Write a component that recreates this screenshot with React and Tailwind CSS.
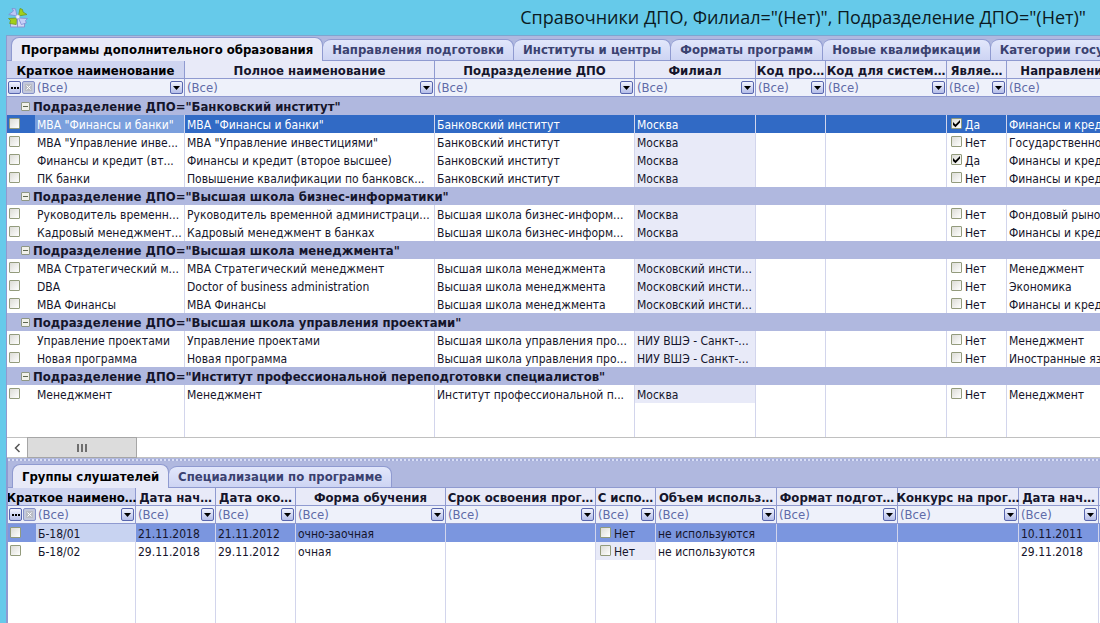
import React, { useState } from 'react';

const topTabs = [
  'Программы дополнительного образования',
  'Направления подготовки',
  'Институты и центры',
  'Форматы программ',
  'Новые квалификации',
  'Категории государственных',
];

const bottomTabs = ['Группы слушателей', 'Специализации по программе'];

const programColumns = [
  { title: 'Краткое наименование', width: 178 },
  { title: 'Полное наименование', width: 250 },
  { title: 'Подразделение ДПО', width: 200 },
  { title: 'Филиал', width: 121, shaded: true },
  { title: 'Код про…', width: 70 },
  { title: 'Код для систем…', width: 121 },
  { title: 'Являе…', width: 60, check: true },
  { title: 'Направление подготовки', width: 200 },
];

const programGroups = [
  {
    name: 'Банковский институт',
    rows: [
      ['МВА "Финансы и банки"', 'МВА "Финансы и банки"', 'Банковский институт', 'Москва', '', '', 'Да', 'Финансы и кредит'],
      ['МВА "Управление инве...', 'МВА "Управление инвестициями"', 'Банковский институт', 'Москва', '', '', 'Нет', 'Государственное управление'],
      ['Финансы и кредит (вт...', 'Финансы и кредит (второе высшее)', 'Банковский институт', 'Москва', '', '', 'Да', 'Финансы и кредит'],
      ['ПК банки', 'Повышение квалификации по банковск...', 'Банковский институт', 'Москва', '', '', 'Нет', 'Финансы и кредит'],
    ],
  },
  {
    name: 'Высшая школа бизнес-информатики',
    rows: [
      ['Руководитель временн...', 'Руководитель временной администраци...', 'Высшая школа бизнес-информ...', 'Москва', '', '', 'Нет', 'Фондовый рынок'],
      ['Кадровый менеджмент...', 'Кадровый менеджмент в банках', 'Высшая школа бизнес-информ...', 'Москва', '', '', 'Нет', 'Финансы и кредит'],
    ],
  },
  {
    name: 'Высшая школа менеджмента',
    rows: [
      ['МВА Стратегический м...', 'МВА Стратегический менеджмент', 'Высшая школа менеджмента', 'Московский инсти...', '', '', 'Нет', 'Менеджмент'],
      ['DBA', 'Doctor of business administration', 'Высшая школа менеджмента', 'Московский инсти...', '', '', 'Нет', 'Экономика'],
      ['МВА Финансы', 'МВА Финансы', 'Высшая школа менеджмента', 'Московский инсти...', '', '', 'Нет', 'Финансы и кредит'],
    ],
  },
  {
    name: 'Высшая школа управления проектами',
    rows: [
      ['Управление проектами', 'Управление проектами', 'Высшая школа управления про...', 'НИУ ВШЭ - Санкт-...', '', '', 'Нет', 'Менеджмент'],
      ['Новая программа', 'Новая программа', 'Высшая школа управления про...', 'НИУ ВШЭ - Санкт-...', '', '', 'Нет', 'Иностранные языки'],
    ],
  },
  {
    name: 'Институт профессиональной переподготовки специалистов',
    rows: [
      ['Менеджмент', 'Менеджмент', 'Институт профессиональной п...', 'Москва', '', '', 'Нет', 'Менеджмент'],
    ],
  },
];

const studentColumns = [
  { title: 'Краткое наимено…', width: 128 },
  { title: 'Дата нач…', width: 80 },
  { title: 'Дата око…', width: 80 },
  { title: 'Форма обучения', width: 150 },
  { title: 'Срок освоения прог…', width: 150 },
  { title: 'С испо…', width: 60, check: true, shaded: true },
  { title: 'Объем использ…', width: 121 },
  { title: 'Формат подгот…', width: 121 },
  { title: 'Конкурс на прог…', width: 121 },
  { title: 'Дата нач…', width: 80 },
];

const studentGroups = [
  {
    rows: [
      ['Б-18/01', '21.11.2018', '21.11.2012', 'очно-заочная', '', 'Нет', 'не используются', '', '', '10.11.2011'],
      ['Б-18/02', '29.11.2018', '29.11.2012', 'очная', '', 'Нет', 'не используются', '', '', '29.11.2018'],
    ],
  },
];

const Logo = () => (
  <svg width="20" height="20" viewBox="0 0 20 20" aria-hidden="true">
    <path d="M2.500 10.500h14v8.500h-14z" fill="#d4daf6" stroke="#8b93cf" />
    <path d="M9.500 11v8" stroke="#8b93cf" />
    <path d="M9 8 7.500 .8 4 .5 5.500 3 .8 6.500z" fill="#bcc8f5" stroke="#7f8bd2" strokeWidth=".8" />
    <path d="M10.500 8 12 .5l2.500 1 .5 2.500 4 2.500z" fill="#a4cf18" stroke="#6d9a22" strokeWidth=".8" />
    <path d="M8.500 10 .5 10.500l2 2-.8 3 6.500 1z" fill="#a4cf18" stroke="#6d9a22" strokeWidth=".8" />
    <path d="M10.500 10l9 .5-2 2 .8 2.500-5 1.500z" fill="#c6d0f7" stroke="#7f8bd2" strokeWidth=".8" />
    <circle cx="9.800" cy="8.800" r="2" fill="#edf1ff" stroke="#a7b1e3" strokeWidth=".6" />
  </svg>
);

const CheckBox = ({ label, defaultChecked }) => (
  <span className="grid size-[11px] shrink-0">
    <input
      type="checkbox"
      aria-label={label}
      defaultChecked={defaultChecked}
      className="peer col-start-1 row-start-1 size-[11px] appearance-none rounded-[1px] border border-[#939b7c] bg-linear-to-br from-[#dcdcd6] to-white"
    />
    <svg
      viewBox="0 0 11 11"
      className="pointer-events-none invisible col-start-1 row-start-1 size-[11px] peer-checked:visible"
      aria-hidden="true"
    >
      <path d="M2 4v3l2.500 2.200L9 4.500V2L4.500 6.500z" fill="#000" />
    </svg>
  </span>
);

const TabStrip = ({ tabs, active, onSelect }) => (
  <div role="tablist" className="flex items-end overflow-hidden bg-[#b0b8df] text-[13px] font-bold">
    <span className="h-6 w-1 shrink-0 border-b border-[#8f9ad0]" />
    {tabs.map((tab, i) => (
      <button
        key={tab}
        role="tab"
        aria-selected={i === active}
        onClick={() => onSelect(i)}
        className={
          i === active
            ? 'h-6 shrink-0 rounded-t-lg border border-b-0 border-[#8f9ad0] bg-[#e8eaf8] px-[9px] whitespace-nowrap text-black'
            : 'h-[22px] shrink-0 rounded-t-lg border border-l-0 border-[#8f9ad0] bg-linear-to-b from-[#e2e7fb] to-[#cdd4f3] px-[9px] whitespace-nowrap text-[#3b4270]'
        }
      >
        {tab}
      </button>
    ))}
    <span className="h-6 flex-1 border-b border-[#8f9ad0]" />
  </div>
);

const FilterCell = ({ column, first }) => (
  <div className="flex h-[17px] items-center gap-px px-px">
    {first && (
      <>
        <button aria-label="Фильтр" className="flex size-[13px] shrink-0 items-center justify-center gap-px rounded-[2px] border border-[#5866ae] bg-linear-to-b from-[#f2f4fe] to-[#b4bde8]">
          <span className="size-[2px] bg-black" />
          <span className="size-[2px] bg-black" />
          <span className="size-[2px] bg-black" />
        </button>
        <button aria-label="Сбросить" className="flex size-[13px] shrink-0 items-center justify-center rounded-[2px] border border-[#8490c8] bg-[#c3c8dc]">
          <svg width="7" height="7" viewBox="0 0 7 7" aria-hidden="true">
            <path d="M0 0h7v7H0z" fill="#b9bcc4" />
            <path d="M1.500 1.500l4 4m0-4l-4 4" stroke="#fff" />
          </svg>
        </button>
      </>
    )}
    <div className="grid min-w-0 flex-1 items-center">
      <select
        aria-label={column.title}
        className="col-start-1 row-start-1 h-[17px] w-full appearance-none pt-px pl-px text-[13px] leading-[16px] text-[#5f6ba8]"
      >
        <option>(Все)</option>
      </select>
      <span className="pointer-events-none col-start-1 row-start-1 flex size-[13px] items-center justify-center justify-self-end rounded-[2px] border border-[#5866ae] bg-linear-to-b from-[#f2f4fe] to-[#b4bde8]">
        <svg width="7" height="4" viewBox="0 0 7 4" aria-hidden="true">
          <path d="M0 0h7L3.500 4z" fill="#000" />
        </svg>
      </span>
    </div>
  </div>
);

const Grid = ({ columns, groups, theme, fillerClass, className }) => {
  const [collapsed, setCollapsed] = useState({});
  const [selected, setSelected] = useState('0-0');

  return (
    <table className={`table-fixed border-separate border-spacing-0 text-[12px] leading-[20px] text-[#15152b] ${className}`}>
      <colgroup>
        {columns.map((col, i) => (
          <col key={i} style={{ width: col.width }} />
        ))}
        <col />
      </colgroup>
      <thead>
        <tr className="bg-[#e8eaf8]">
          {columns.map((col, i) => (
            <th
              key={i}
              className={`border-r border-b border-[#8f9ad0] p-0 text-[13px] leading-[19px] font-bold whitespace-nowrap ${i === 0 ? 'bg-[#cfd5f0] text-black' : ''}`}
            >
              <div className="flex h-[17px] items-start justify-center">{col.title}</div>
            </th>
          ))}
          <td className="border-b border-[#8f9ad0] p-0" />
        </tr>
        <tr className="bg-[#eef1fa]">
          {columns.map((col, i) => (
            <td key={i} className="h-[18px] border-r border-b border-[#8f9ad0] p-0">
              <FilterCell column={col} first={i === 0} />
            </td>
          ))}
          <td className="border-b border-[#8f9ad0] p-0" />
        </tr>
      </thead>
      <tbody>
        {groups.map((group, g) => (
          <React.Fragment key={g}>
            {group.name && (
              <tr className="bg-[#b0b8df]">
                <td colSpan={columns.length + 1} className="h-[18px] p-0">
                  <div className="flex h-[18px] items-start pl-[14px] text-[13px] leading-[19px] font-bold whitespace-nowrap">
                    <button
                      aria-label={group.name}
                      onClick={() => setCollapsed({ ...collapsed, [g]: !collapsed[g] })}
                      className="mt-[5px] mr-[3px] flex size-[9px] items-center justify-center rounded-[1px] border border-[#8f9784] bg-[#f1f1ea]"
                    >
                      <span className="h-px w-[5px] bg-[#5d6650]" />
                    </button>
                    Подразделение ДПО="{group.name}"
                  </div>
                </td>
              </tr>
            )}
            {!collapsed[g] &&
              group.rows.map((row, r) => {
                const isSelected = selected === `${g}-${r}`;
                return (
                  <tr key={r} onClick={() => setSelected(`${g}-${r}`)} className={isSelected ? theme.row : ''}>
                    {row.map((value, i) => (
                      <td
                        key={i}
                        className={`h-[18px] overflow-hidden border-r border-[#d2d5ec] p-0 whitespace-nowrap ${columns[i].shaded && !isSelected ? 'bg-[#e8eaf8]' : ''}`}
                      >
                        {i === 0 && (
                          <div className="flex h-[18px]">
                            <span className="w-7 shrink-0 pt-[3px] pl-[2px]">
                              <CheckBox label={value} />
                            </span>
                            <span className={`min-w-0 flex-1 overflow-hidden pl-[2px] ${isSelected ? theme.cell : ''}`}>
                              {value}
                            </span>
                          </div>
                        )}
                        {i > 0 && columns[i].check && (
                          <label className="flex h-[18px] gap-[3px] pl-1">
                            <span className="pt-[3px]">
                              <CheckBox label={columns[i].title} defaultChecked={value === 'Да'} />
                            </span>
                            {value}
                          </label>
                        )}
                        {i > 0 && !columns[i].check && <span className="block h-[18px] pl-[2px]">{value}</span>}
                      </td>
                    ))}
                    <td className="p-0" />
                  </tr>
                );
              })}
          </React.Fragment>
        ))}
        <tr>
          {columns.map((col, i) => (
            <td key={i} className={`border-r border-[#d2d5ec] p-0 ${fillerClass}`} />
          ))}
          <td className="p-0" />
        </tr>
      </tbody>
    </table>
  );
};

const App = () => {
  const [topTab, setTopTab] = useState(0);
  const [bottomTab, setBottomTab] = useState(0);

  return (
    <div className="flex min-h-screen flex-col overflow-hidden bg-[#66caea] pl-[6px] font-['DejaVu_Sans_Condensed','DejaVu_Sans',sans-serif]">
      <header className="flex h-9 items-center justify-between border-b border-[#7fa5cf] pr-[14px] pl-[2px]">
        <Logo />
        <h1 className="font-['Open_Sans',sans-serif] text-[18px] text-[#0b1a22]">
          Справочники ДПО, Филиал="(Нет)", Подразделение ДПО="(Нет)"
        </h1>
      </header>

      <main className="flex flex-1 flex-col border-l border-[#8f9ad0] bg-white">
        {/* Programs */}
        <div className="bg-[#b0b8df] pt-px">
          <TabStrip tabs={topTabs} active={topTab} onSelect={setTopTab} />
        </div>
        <div className="overflow-hidden">
          <Grid
            columns={programColumns}
            groups={programGroups}
            theme={{ row: 'bg-[#316ac5] text-white', cell: 'bg-[#7a9fdd]' }}
            fillerClass="h-[34px]"
            className="w-full min-w-[1200px]"
          />
        </div>

        {/* Horizontal scroll bar */}
        <div className="flex h-[21px] border-y border-[#c0c0c0] bg-white">
          <button aria-label="Прокрутить влево" className="flex w-5 items-center justify-center">
            <svg width="7" height="10" viewBox="0 0 7 10" aria-hidden="true">
              <path d="M5.500 1 1.500 5l4 4" fill="none" stroke="#555" strokeWidth="1.500" />
            </svg>
          </button>
          <div className="-my-px flex w-[110px] items-center justify-center gap-[2px] border border-[#a6a6a6] bg-[#dcdcdc]">
            <span className="h-2 w-[2px] bg-[#6e6e6e]" />
            <span className="h-2 w-[2px] bg-[#6e6e6e]" />
            <span className="h-2 w-[2px] bg-[#6e6e6e]" />
          </div>
        </div>

        {/* Student groups */}
        <div className="flex flex-1 flex-col border-l border-[#8f9ad0]">
          <div className="bg-[#b0b8df] pt-px">
            <div className="mb-[3px] h-[2px] bg-[repeating-linear-gradient(90deg,#d8def6_0_2px,#a3acd8_2px_4px)]" />
            <TabStrip tabs={bottomTabs} active={bottomTab} onSelect={setBottomTab} />
          </div>
          <div className="flex flex-1 overflow-hidden">
            <Grid
              columns={studentColumns}
              groups={studentGroups}
              theme={{ row: 'bg-[#7b96df]', cell: 'bg-[#c8d3f1]' }}
              fillerClass=""
              className="w-full min-w-[1092px]"
            />
          </div>
        </div>
      </main>
    </div>
  );
};

export default App;
